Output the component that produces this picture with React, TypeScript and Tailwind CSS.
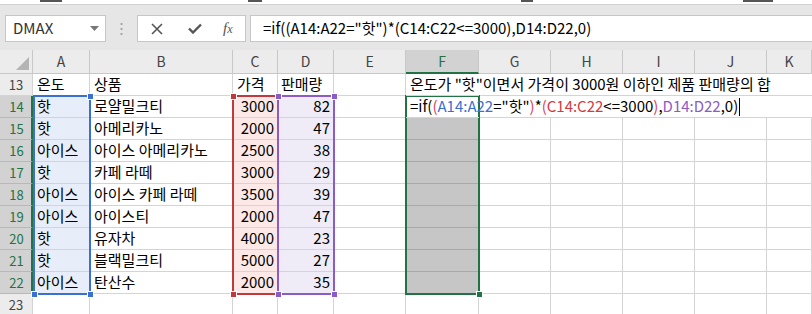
import React from "react";

const KR = { fontFamily: '"Noto Sans CJK KR", "Noto Sans", sans-serif' };

interface DataRow {
  n: number;
  temp: string;
  name: string;
  price: string;
  qty: string;
}

const data: DataRow[] = [
  { n: 14, temp: "핫", name: "로얄밀크티", price: "3000", qty: "82" },
  { n: 15, temp: "핫", name: "아메리카노", price: "2000", qty: "47" },
  { n: 16, temp: "아이스", name: "아이스 아메리카노", price: "2500", qty: "38" },
  { n: 17, temp: "핫", name: "카페 라떼", price: "3000", qty: "29" },
  { n: 18, temp: "아이스", name: "아이스 카페 라떼", price: "3500", qty: "39" },
  { n: 19, temp: "아이스", name: "아이스티", price: "2000", qty: "47" },
  { n: 20, temp: "핫", name: "유자차", price: "4000", qty: "23" },
  { n: 21, temp: "핫", name: "블랙밀크티", price: "5000", qty: "27" },
  { n: 22, temp: "아이스", name: "탄산수", price: "2000", qty: "35" },
];

const letters = ["A", "B", "C", "D", "E", "F", "G", "H", "I", "J", "K"];

const cell = "h-[22px] border-r border-b border-[#d4d4d4] flex items-center text-[15px] text-black whitespace-nowrap";
const open = "h-[22px] border-b border-[#d4d4d4] flex items-center text-[15px] text-black whitespace-nowrap";

// formula text, coloured like excel's edit mode when colored=true
function Formula({ colored }: { colored?: boolean }) {
  const paren = colored ? "text-[#e0405a]" : "";
  return (
    <span className="whitespace-nowrap">
      <span>=if(</span>
      <span className={paren}>(</span>
      <span className={colored ? "text-[#3b6fd0]" : ""}>A14:A22</span>
      <span>="핫"</span>
      <span className={paren}>)</span>
      <span>*</span>
      <span className={paren}>(</span>
      <span className={colored ? "text-[#d23a3e]" : ""}>C14:C22</span>
      <span>&lt;=3000</span>
      <span className={paren}>)</span>
      <span>,</span>
      <span className={colored ? "text-[#8b5cc6]" : ""}>D14:D22</span>
      <span>,0)</span>
    </span>
  );
}

function RowHead({ n, sel }: { n: number; sel?: boolean }) {
  return sel ? (
    <div className="h-[22px] border-b border-[#b8b8b8] border-r-2 border-r-[#217346] bg-[#d2d2d2] text-[#217346] text-[13px] flex items-center justify-center pl-[2px]">
      {n}
    </div>
  ) : (
    <div className="h-[22px] border-b border-r border-[#d4d4d4] bg-[#ececec] text-[#444] text-[13px] flex items-center justify-center">
      {n}
    </div>
  );
}

function Handle({ x, y, color }: { x: number; y: number; color: string }) {
  return (
    <div
      className={`absolute w-[7px] h-[7px] border border-white ${color}`}
      style={{ left: x - 3, top: y - 3 }}
    />
  );
}

export default function App() {
  return (
    <div className="w-[812px] h-[314px] overflow-hidden bg-white" style={KR}>
      {/* formula bar */}
      <div className="h-[50px] bg-[#e6e6e6] flex flex-col">
        <div className="h-[5px] bg-white border-b border-[#d0d0d0] relative">
          <div className="absolute left-[40px] top-0 w-[22px] h-[2px] bg-[#555]" />
          <div className="absolute left-[248px] top-0 w-[14px] h-[2px] bg-[#555]" />
          <div className="absolute left-[521px] top-0 w-[12px] h-[2px] bg-[#555]" />
          <div className="absolute left-[743px] top-0 w-[30px] h-[2px] bg-[#555]" />
        </div>
        <div className="flex h-[27px] mt-[10px]">
          <div className="ml-[5px] w-[101px] bg-white border border-[#c6c6c6] flex items-center justify-between pl-[7px] pr-[6px]">
            <span className="text-[15px] text-[#333]">DMAX</span>
            <svg width="9" height="5" viewBox="0 0 9 5">
              <path d="M0 0H9L4.5 5Z" fill="#777" />
            </svg>
          </div>
          <div className="w-[31px] flex items-center justify-center">
            <svg width="3" height="12" viewBox="0 0 3 12">
              <rect x="0.5" y="0" width="2" height="2" fill="#a8a8a8" />
              <rect x="0.5" y="5" width="2" height="2" fill="#a8a8a8" />
              <rect x="0.5" y="10" width="2" height="2" fill="#a8a8a8" />
            </svg>
          </div>
          <div className="w-[109px] bg-white border border-[#c6c6c6] flex items-center">
            <svg className="ml-[13px]" width="12" height="12" viewBox="0 0 12 12">
              <path d="M1 1L11 11M11 1L1 11" stroke="#555" strokeWidth="1.6" />
            </svg>
            <svg className="ml-[25px]" width="14" height="11" viewBox="0 0 14 11">
              <path d="M1 5.5L5 9.5L13 1.5" stroke="#555" strokeWidth="2.4" fill="none" />
            </svg>
            <span
              className="ml-[21px] text-[15px] italic text-[#555]"
              style={{ fontFamily: '"Liberation Serif", serif' }}
            >
              f<span className="text-[12px]">x</span>
            </span>
          </div>
          <div className="ml-[4px] flex-1 bg-white border border-[#c6c6c6] border-r-0 flex items-center pl-[12px] text-[15px] text-black">
            <Formula />
          </div>
        </div>
      </div>

      {/* sheet */}
      <div className="relative grid grid-cols-[33px_57px_143px_45px_56px_72px_73px_72px_72px_72px_72px_45px]">
        {/* column headers */}
        <div className="h-[24px] bg-[#ececec] border-r border-b border-[#c8c8c8] relative">
          <svg className="absolute right-[3px] bottom-[3px]" width="13" height="13" viewBox="0 0 13 13">
            <path d="M13 0V13H0Z" fill="#b4b4b4" />
          </svg>
        </div>
        {letters.map((l) =>
          l === "F" ? (
            <div
              key={l}
              className="h-[24px] bg-[#d2d2d2] border-r border-[#c8c8c8] border-b-2 border-b-[#217346] text-[#217346] text-[14px] flex items-center justify-center"
            >
              {l}
            </div>
          ) : (
            <div
              key={l}
              className="h-[24px] bg-[#ececec] border-r border-b border-[#c8c8c8] text-[#444] text-[14px] flex items-center justify-center"
            >
              {l}
            </div>
          )
        )}

        {/* row 13 */}
        <RowHead n={13} />
        <div className={`${cell} pl-[4px]`}>온도</div>
        <div className={`${cell} pl-[4px]`}>상품</div>
        <div className={`${cell} pl-[4px]`}>가격</div>
        <div className={`${cell} pl-[3px]`}>판매량</div>
        <div className={cell} />
        <div className={`${open} pl-[4px] relative z-10 overflow-visible`}>
          온도가 "핫"이면서 가격이 3000원 이하인 제품 판매량의 합
        </div>
        <div className={open} />
        <div className={open} />
        <div className={open} />
        <div className={open} />
        <div className={open} />

        {data.map((r) => (
          <React.Fragment key={r.n}>
            <RowHead n={r.n} sel />
            <div className={`${cell} pl-[4px] bg-[#e8eef9]`}>{r.temp}</div>
            <div className={`${cell} pl-[4px]`}>{r.name}</div>
            <div className={`${cell} justify-end pr-[3px] bg-[#fbe8e7]`}>{r.price}</div>
            <div className={`${cell} justify-end pr-[3px] bg-[#efecf7]`}>{r.qty}</div>
            <div className={cell} />
            {r.n === 14 ? (
              <>
                <div className={`${open} pl-[4px] relative z-10 overflow-visible`}>
                  <Formula colored />
                  <span className="inline-block w-[1px] h-[18px] bg-black ml-[1px] shrink-0" />
                </div>
                <div className={open} />
                <div className={open} />
                <div className={open} />
                <div className={open} />
                <div className={open} />
              </>
            ) : (
              <>
                <div className="h-[22px] bg-[#c6c6c6] border-r border-b border-[#a9a9a9]" />
                <div className={cell} />
                <div className={cell} />
                <div className={cell} />
                <div className={cell} />
                <div className={cell} />
              </>
            )}
          </React.Fragment>
        ))}

        {/* row 23 */}
        <RowHead n={23} />
        {letters.map((l) => (
          <div key={l} className={cell} />
        ))}

        {/* range outlines */}
        <div className="absolute left-[33px] top-[45px] w-[58px] h-[200px] border-2 border-[#3b6fd0]" />
        <div className="absolute left-[232px] top-[45px] w-[47px] h-[200px] border-2 border-[#c0393d]" />
        <div className="absolute left-[277px] top-[45px] w-[58px] h-[200px] border-2 border-[#8b5cc6]" />
        <div className="absolute left-[405px] top-[45px] w-[75px] h-[200px] border-2 border-[#217346]" />

        <Handle x={90} y={46} color="bg-[#3b6fd0]" />
        <Handle x={34} y={244} color="bg-[#3b6fd0]" />
        <Handle x={90} y={244} color="bg-[#3b6fd0]" />
        <Handle x={233} y={46} color="bg-[#c0393d]" />
        <Handle x={233} y={244} color="bg-[#c0393d]" />
        <Handle x={278} y={46} color="bg-[#8b5cc6]" />
        <Handle x={334} y={46} color="bg-[#8b5cc6]" />
        <Handle x={278} y={244} color="bg-[#8b5cc6]" />
        <Handle x={334} y={244} color="bg-[#8b5cc6]" />
        <Handle x={479} y={244} color="bg-[#217346]" />
      </div>
    </div>
  );
}
